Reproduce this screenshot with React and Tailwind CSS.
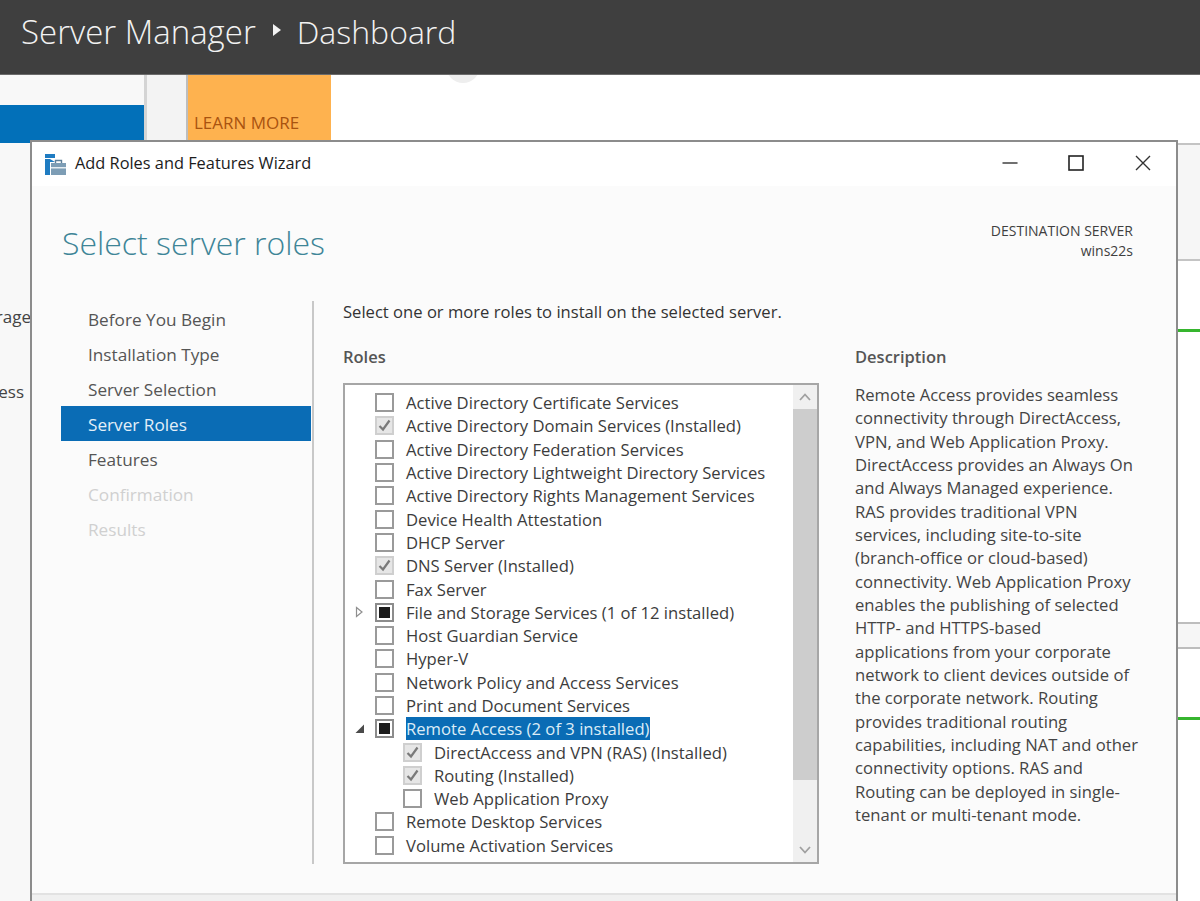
import { useState } from "react";

const navItems = [
    { name: 'Before You Begin', state: 'done' },
    { name: 'Installation Type', state: 'done' },
    { name: 'Server Selection', state: 'done' },
    { name: 'Server Roles', state: 'active' },
    { name: 'Features', state: 'done' },
    { name: 'Confirmation', state: 'off' },
    { name: 'Results', state: 'off' },
];

const roles = [
    { name: 'Active Directory Certificate Services' },
    { name: 'Active Directory Domain Services (Installed)', check: 'on' },
    { name: 'Active Directory Federation Services' },
    { name: 'Active Directory Lightweight Directory Services' },
    { name: 'Active Directory Rights Management Services' },
    { name: 'Device Health Attestation' },
    { name: 'DHCP Server' },
    { name: 'DNS Server (Installed)', check: 'on' },
    { name: 'Fax Server' },
    { name: 'File and Storage Services (1 of 12 installed)', check: 'part', arrow: 'closed' },
    { name: 'Host Guardian Service' },
    { name: 'Hyper-V' },
    { name: 'Network Policy and Access Services' },
    { name: 'Print and Document Services' },
    { name: 'Remote Access (2 of 3 installed)', check: 'part', arrow: 'open', selected: true },
    { name: 'DirectAccess and VPN (RAS) (Installed)', check: 'on', child: true },
    { name: 'Routing (Installed)', check: 'on', child: true },
    { name: 'Web Application Proxy', child: true },
    { name: 'Remote Desktop Services' },
    { name: 'Volume Activation Services' },
];

const description = [
    'Remote Access provides seamless',
    'connectivity through DirectAccess,',
    'VPN, and Web Application Proxy.',
    'DirectAccess provides an Always On',
    'and Always Managed experience.',
    'RAS provides traditional VPN',
    'services, including site-to-site',
    '(branch-office or cloud-based)',
    'connectivity. Web Application Proxy',
    'enables the publishing of selected',
    'HTTP- and HTTPS-based',
    'applications from your corporate',
    'network to client devices outside of',
    'the corporate network. Routing',
    'provides traditional routing',
    'capabilities, including NAT and other',
    'connectivity options. RAS and',
    'Routing can be deployed in single-',
    'tenant or multi-tenant mode.',
];

function CheckBox({ check }) {
    if (check === 'on') {
        return (
            <div className="w-[19px] h-[19px] shrink-0 border-2 border-[#cfcfcf] bg-[#e6e6e6] flex items-center justify-center">
                <svg width="15" height="15" viewBox="0 0 15 15" fill="none">
                    <path d="M2.5 8 L6 11.5 L12.5 2.5" stroke="#7a7a7a" strokeWidth="2.2" />
                </svg>
            </div>
        );
    }
    if (check === 'part') {
        return (
            <div className="w-[19px] h-[19px] shrink-0 border-2 border-[#8c8c8c] bg-white flex items-center justify-center">
                <div className="w-[11px] h-[11px] bg-[#1c1c1c]" />
            </div>
        );
    }
    return <div className="w-[19px] h-[19px] shrink-0 border-2 border-[#9a9a9a] bg-white" />;
}

function Arrow({ type }) {
    if (type === 'closed') {
        return (
            <svg width="9" height="12" viewBox="0 0 9 12" fill="none">
                <path d="M1.5 1.5 L7 6 L1.5 10.5 Z" stroke="#8f8f8f" strokeWidth="1.2" />
            </svg>
        );
    }
    if (type === 'open') {
        return (
            <svg width="11" height="11" viewBox="0 0 11 11">
                <path d="M10 1.5 L10 10 L1.5 10 Z" fill="#4a4a4a" />
            </svg>
        );
    }
    return null;
}

function RoleRow({ role }) {
    return (
        <div className={`h-[23.3px] flex items-center ${role.child ? 'pl-[58px]' : 'pl-[30px]'}`}>
            <div className="w-[21px] -ml-[26px] mr-[5px] flex justify-center shrink-0">
                <Arrow type={role.arrow} />
            </div>
            <CheckBox check={role.check} />
            <span className={`ml-[12px] whitespace-nowrap leading-[23px] ${role.selected ? 'bg-[#0a6cb5] text-[#dcecf7] pr-[1px]' : 'text-[#3c3c3c]'}`}>
                {role.name}
            </span>
        </div>
    );
}

function WizardIcon() {
    return (
        <svg width="21" height="21" viewBox="0 0 21 21">
            <rect x="0" y="0" width="10" height="4" fill="#1f7cc2" />
            <path d="M0 5 H5 L10 8 H5 V21 H0 Z" fill="#1f7cc2" />
            <rect x="6" y="9" width="15" height="12" fill="#7d9db5" />
            <rect x="6" y="13" width="15" height="1.5" fill="#e6edf2" />
            <path d="M10.5 9 V6.5 H16.5 V9" fill="none" stroke="#5e7f99" strokeWidth="1.4" />
        </svg>
    );
}

export default function App() {
    const [current] = useState(3);

    return (
        <div className="relative w-[1200px] h-[901px] overflow-hidden bg-white font-['Open_Sans',sans-serif]">
            <div className="relative z-10 h-[75px] bg-[#3f3f3f] border-b border-[#6b6b6b] flex items-center pl-[21px] pb-[10px] text-[#f2f2f2] font-light text-[33px] whitespace-nowrap">
                <span>Server Manager</span>
                <svg className="ml-[17px] mr-[16px] mb-[4px]" width="8" height="12" viewBox="0 0 8 12">
                    <path d="M0 0 L8 6 L0 12 Z" fill="#f2f2f2" />
                </svg>
                <span className="text-[32px]">Dashboard</span>
            </div>

            <div className="flex h-[826px]">
                <div className="w-[147px] shrink-0 bg-[#f8f8f8] border-r-[3px] border-[#d4d4d4] pt-[30px]">
                    <div className="h-[38px] bg-[#0270b9]" />
                    <div className="w-[31px] h-[25px] mt-[161px] overflow-hidden flex justify-end whitespace-nowrap text-[17px] leading-[25px] text-[#444444]">
                        <span className="shrink-0">File and Storage</span>
                    </div>
                    <div className="w-[31px] h-[25px] mt-[50px] pr-[7px] overflow-hidden flex justify-end whitespace-nowrap text-[17px] leading-[25px] text-[#444444]">
                        <span className="shrink-0">Remote Access</span>
                    </div>
                </div>
                <div className="w-[41px] shrink-0 bg-[#f3f3f3] border-r-2 border-[#bdbdbd]" />
                <div className="w-[143px] h-[70px] shrink-0 bg-[#feb24f] flex items-end px-[6px] pb-[10px]">
                    <span className="text-[#a9530f] text-[17px] leading-[24px] whitespace-nowrap">LEARN MORE</span>
                </div>
                <div className="w-[34px] h-[34px] ml-[115px] -mt-[26px] rounded-full bg-[#eeeeee] shrink-0" />
                <div className="ml-auto w-[23px] shrink-0">
                    <div className="h-[68px]" />
                    <div className="h-[118px] bg-[#f6f6f6] border-y-2 border-[#c4c4c4]" />
                    <div className="h-[68px]" />
                    <div className="h-[3px] bg-[#36b52e]" />
                    <div className="h-[290px]" />
                    <div className="h-[27px] bg-[#f6f6f6] border-y-2 border-[#bdbdbd]" />
                    <div className="h-[68px]" />
                    <div className="h-[3px] bg-[#36b52e]" />
                </div>
            </div>

            {/* wizard window sits over the dashboard */}
            <div className="absolute left-[30px] top-[140px] w-[1148px] h-[770px] border-2 border-[#8c8c8c] bg-[#fbfbfb] flex flex-col text-[16.65px]">
                <div className="h-[44px] shrink-0 bg-white flex items-center pl-[13px]">
                    <WizardIcon />
                    <span className="ml-[9px] mb-[2px] text-[#1c1c1c] text-[16.35px] whitespace-nowrap">Add Roles and Features Wizard</span>
                    <div className="ml-auto flex items-center h-full pb-[3px]">
                        <svg width="16" height="16" viewBox="0 0 16 16" className="mr-[50px]">
                            <path d="M0.5 8 H15.5" stroke="#333333" strokeWidth="1.4" />
                        </svg>
                        <svg width="16" height="16" viewBox="0 0 16 16" className="mr-[51px]">
                            <rect x="1" y="1" width="14" height="14" fill="none" stroke="#222222" strokeWidth="1.6" />
                        </svg>
                        <svg width="16" height="16" viewBox="0 0 16 16" className="mr-[25px]">
                            <path d="M1 1 L15 15 M15 1 L1 15" stroke="#333333" strokeWidth="1.4" />
                        </svg>
                    </div>
                </div>

                <div className="h-[115px] shrink-0 flex justify-between pl-[30px] pr-[43px]">
                    <h1 className="mt-[35px] text-[32px] leading-[44px] font-light text-[#3e8597] whitespace-nowrap">Select server roles</h1>
                    <div className="mt-[35px] text-right text-[14px] leading-[20px] text-[#3f3f3f]">
                        <div>DESTINATION SERVER</div>
                        <div>wins22s</div>
                    </div>
                </div>

                <div className="flex">
                    <div className="w-[250px] ml-[29px] shrink-0">
                        {navItems.map((item, index) => (
                            <div
                                key={index}
                                className={`h-[35px] pl-[27px] pt-[3px] flex items-center whitespace-nowrap text-[17.2px] ${
                                    index === current ? 'bg-[#0a6cb5] text-[#e3eff8]' : item.state === 'off' ? 'text-[#d0d0d0]' : 'text-[#555555]'
                                }`}
                            >
                                {item.name}
                            </div>
                        ))}
                    </div>
                    <div className="w-[2px] h-[563px] ml-[1px] bg-[#c8c8c8] shrink-0" />
                    <div className="ml-[29px] flex-1">
                        <div className="h-[23px] -mt-[1px] leading-[23px] text-[16.6px] text-[#333333]">Select one or more roles to install on the selected server.</div>
                        <div className="h-[22px] mt-[23px] flex font-semibold text-[#555555] text-[16.5px] leading-[22px]">
                            <span className="w-[512px]">Roles</span>
                            <span>Description</span>
                        </div>
                        <div className="flex mt-[15px]">
                            <div className="w-[476px] h-[481px] shrink-0 border-2 border-[#a6a6a6] bg-white flex">
                                <div className="flex-1 pt-[6px] overflow-hidden">
                                    {roles.map((role) => (
                                        <RoleRow key={role.name} role={role} />
                                    ))}
                                </div>
                                <div className="w-[24px] shrink-0 bg-[#f0f0f0] flex flex-col">
                                    <div className="h-[24px] flex items-center justify-center">
                                        <svg width="12" height="8" viewBox="0 0 12 8" fill="none">
                                            <path d="M1 7 L6 1.5 L11 7" stroke="#a0a0a0" strokeWidth="1.8" />
                                        </svg>
                                    </div>
                                    <div className="h-[371px] bg-[#cdcdcd]" />
                                    <div className="mt-auto h-[24px] flex items-center justify-center">
                                        <svg width="12" height="8" viewBox="0 0 12 8" fill="none">
                                            <path d="M1 1 L6 6.5 L11 1" stroke="#a0a0a0" strokeWidth="1.8" />
                                        </svg>
                                    </div>
                                </div>
                            </div>
                            <div className="ml-[36px] text-[#444444] whitespace-nowrap">
                                {description.map((line) => (
                                    <div key={line} className="h-[23.33px] leading-[23.33px]">{line}</div>
                                ))}
                            </div>
                        </div>
                    </div>
                </div>

                <div className="mt-[29px] flex-1 bg-[#f0f0f0] border-t-2 border-[#e2e2e2]" />
            </div>
        </div>
    );
}
